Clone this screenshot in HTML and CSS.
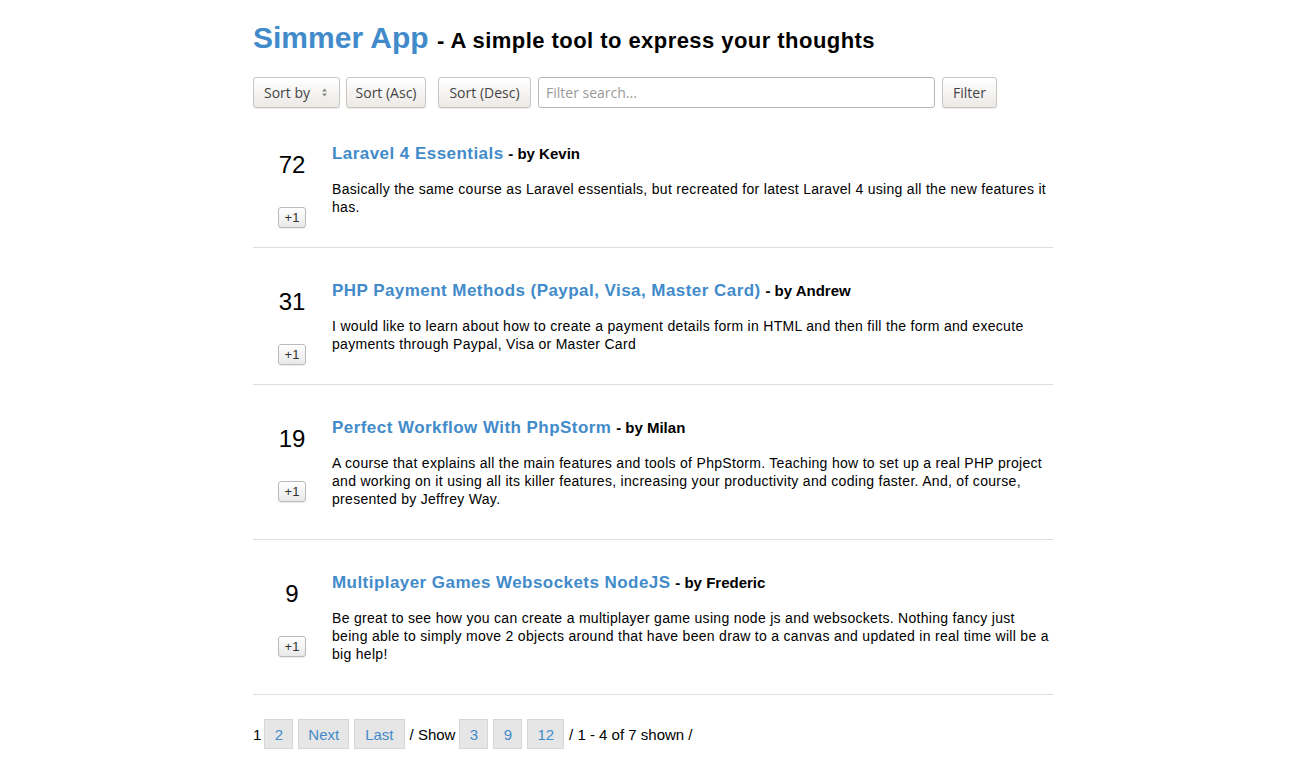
FILE: index.html
```html
<!DOCTYPE html>
<html>
<head>
<meta charset="utf-8">
<link rel="stylesheet" href="styles.css">
</head>
<body>
<div class="container">
  <h1 class="title"><span class="brand">Simmer App</span> <span class="tagline">- A simple tool to express your thoughts</span></h1>
  <div class="toolbar">
    <div class="select">Sort by <span class="arrows"><svg width="7" height="11" viewBox="0 0 7 11"><path d="M1 4.5 L3.5 1.5 L6 4.5 Z" fill="#888"/><path d="M1 6.5 L3.5 9.5 L6 6.5 Z" fill="#888"/></svg></span></div>
    <button class="btn btn-asc">Sort (Asc)</button>
    <button class="btn btn-desc">Sort (Desc)</button>
    <input class="search" type="text" placeholder="Filter search...">
    <button class="btn btn-filter">Filter</button>
  </div>

  <div class="item">
    <div class="vote"><div class="count">72</div><button class="plus">+1</button></div>
    <div class="body">
      <h3 class="item-title"><a>Laravel 4 Essentials</a> <span class="by">- by Kevin</span></h3>
      <p class="desc">Basically the same course as Laravel essentials, but recreated for latest Laravel 4 using all the new features it has.</p>
    </div>
  </div>
  <div class="item">
    <div class="vote"><div class="count">31</div><button class="plus">+1</button></div>
    <div class="body">
      <h3 class="item-title"><a>PHP Payment Methods (Paypal, Visa, Master Card)</a> <span class="by">- by Andrew</span></h3>
      <p class="desc">I would like to learn about how to create a payment details form in HTML and then fill the form and execute payments through Paypal, Visa or Master Card</p>
    </div>
  </div>
  <div class="item">
    <div class="vote"><div class="count">19</div><button class="plus">+1</button></div>
    <div class="body">
      <h3 class="item-title"><a>Perfect Workflow With PhpStorm</a> <span class="by">- by Milan</span></h3>
      <p class="desc">A course that explains all the main features and tools of PhpStorm. Teaching how to set up a real PHP project and working on it using all its killer features, increasing your productivity and coding faster. And, of course, presented by Jeffrey Way.</p>
    </div>
  </div>
  <div class="item">
    <div class="vote"><div class="count">9</div><button class="plus">+1</button></div>
    <div class="body">
      <h3 class="item-title"><a>Multiplayer Games Websockets NodeJS</a> <span class="by">- by Frederic</span></h3>
      <p class="desc">Be great to see how you can create a multiplayer game using node js and websockets. Nothing fancy just being able to simply move 2 objects around that have been draw to a canvas and updated in real time will be a big help!</p>
    </div>
  </div>

  <div class="pager">
    <span class="cur">1</span>
    <a class="pg">2</a>
    <a class="pg">Next</a>
    <a class="pg pg-last">Last</a>
    <span class="txt">/ Show</span>
    <a class="pg">3</a>
    <a class="pg">9</a>
    <a class="pg">12</a>
    <span class="txt">/ 1 - 4 of 7 shown /</span>
  </div>
</div>
</body>
</html>
```

FILE: styles.css
```css
* { box-sizing: border-box; }
html, body { margin: 0; padding: 0; background: #fff; }
body {
  font-family: "Liberation Sans", Arial, sans-serif;
  color: #000;
}
.container {
  width: 800px;
  margin-left: 253px;
  padding-top: 18px;
}
.title {
  margin: 0;
  font-size: 30px;
  line-height: 40px;
  font-weight: bold;
}
.brand { color: #428bca; }
.tagline { font-size: 22px; color: #000; letter-spacing: 0.45px; }

.toolbar {
  display: flex;
  align-items: center;
  margin-top: 16px;
  margin-bottom: 2px;
  height: 31px;
}
.select, .btn {
  font-family: "Open Sans", "DejaVu Sans", sans-serif;
  font-size: 14px;
  color: #444;
  height: 31px;
  border: 1px solid #c9c5c0;
  border-radius: 3px;
  background: linear-gradient(#ffffff, #ece9e6);
  display: flex;
  align-items: center;
  justify-content: center;
  padding: 0;
  margin-right: 6px;
  box-shadow: 0 1px 1px rgba(0,0,0,0.08);
}
.select { width: 87px; padding: 0 11px 0 10px; justify-content: space-between; }
.btn-asc { width: 80px; }
.btn-desc { width: 93px; margin-left: 6px; margin-right: 7px; }
.btn-filter { width: 55px; }
.arrows { display: flex; align-items: center; }
.search {
  width: 397px;
  height: 31px;
  border: 1px solid #b9b6b2;
  border-radius: 3px;
  padding: 0 7px;
  font-family: "Open Sans", "DejaVu Sans", sans-serif;
  font-size: 14px;
  margin-right: 7px;
  outline: none;
}
.search::placeholder { color: #999; }

.item {
  display: flex;
  padding: 34px 0 31px;
  border-bottom: 1px solid #ddd;
}
.item + .item { padding-top: 33px; }
.vote {
  width: 79px;
  padding-right: 1px;
  display: flex;
  flex-direction: column;
  align-items: center;
  flex-shrink: 0;
}
.count {
  font-size: 24px;
  line-height: 28px;
  margin-top: 7px;
}
.plus {
  margin-top: 28px;
  margin-bottom: -12px;
  font-family: "Liberation Sans", Arial, sans-serif;
  font-size: 13px;
  color: #333;
  width: 28px;
  height: 21px;
  padding: 0;
  border: 1px solid #bbb;
  border-radius: 3px;
  background: linear-gradient(#fff, #e8e8e8);
  box-shadow: 0 1px 1px rgba(0,0,0,0.08);
}
.body { flex: 1; }
.item-title {
  margin: 0;
  font-size: 17px;
  line-height: 20px;
  font-weight: bold;
}
.item-title a { color: #428bca; letter-spacing: 0.45px; }
.by { font-size: 15px; color: #000; }
.desc {
  margin: 16px 0 0;
  font-size: 14px;
  line-height: 18px;
  letter-spacing: 0.3px;
}

.pager {
  display: flex;
  align-items: center;
  margin-top: 24px;
  font-size: 15px;
}
.cur { margin-right: 3px; }
.pg {
  display: inline-flex;
  align-items: center;
  justify-content: center;
  height: 30px;
  min-width: 29px;
  padding: 0 9px;
  background: #e6e6e6;
  border: 1px solid #d6d6d6;
  color: #428bca;
  margin-right: 5px;
}
.pg-last { padding: 0 10px; }
.txt { margin-right: 4px; }
```
